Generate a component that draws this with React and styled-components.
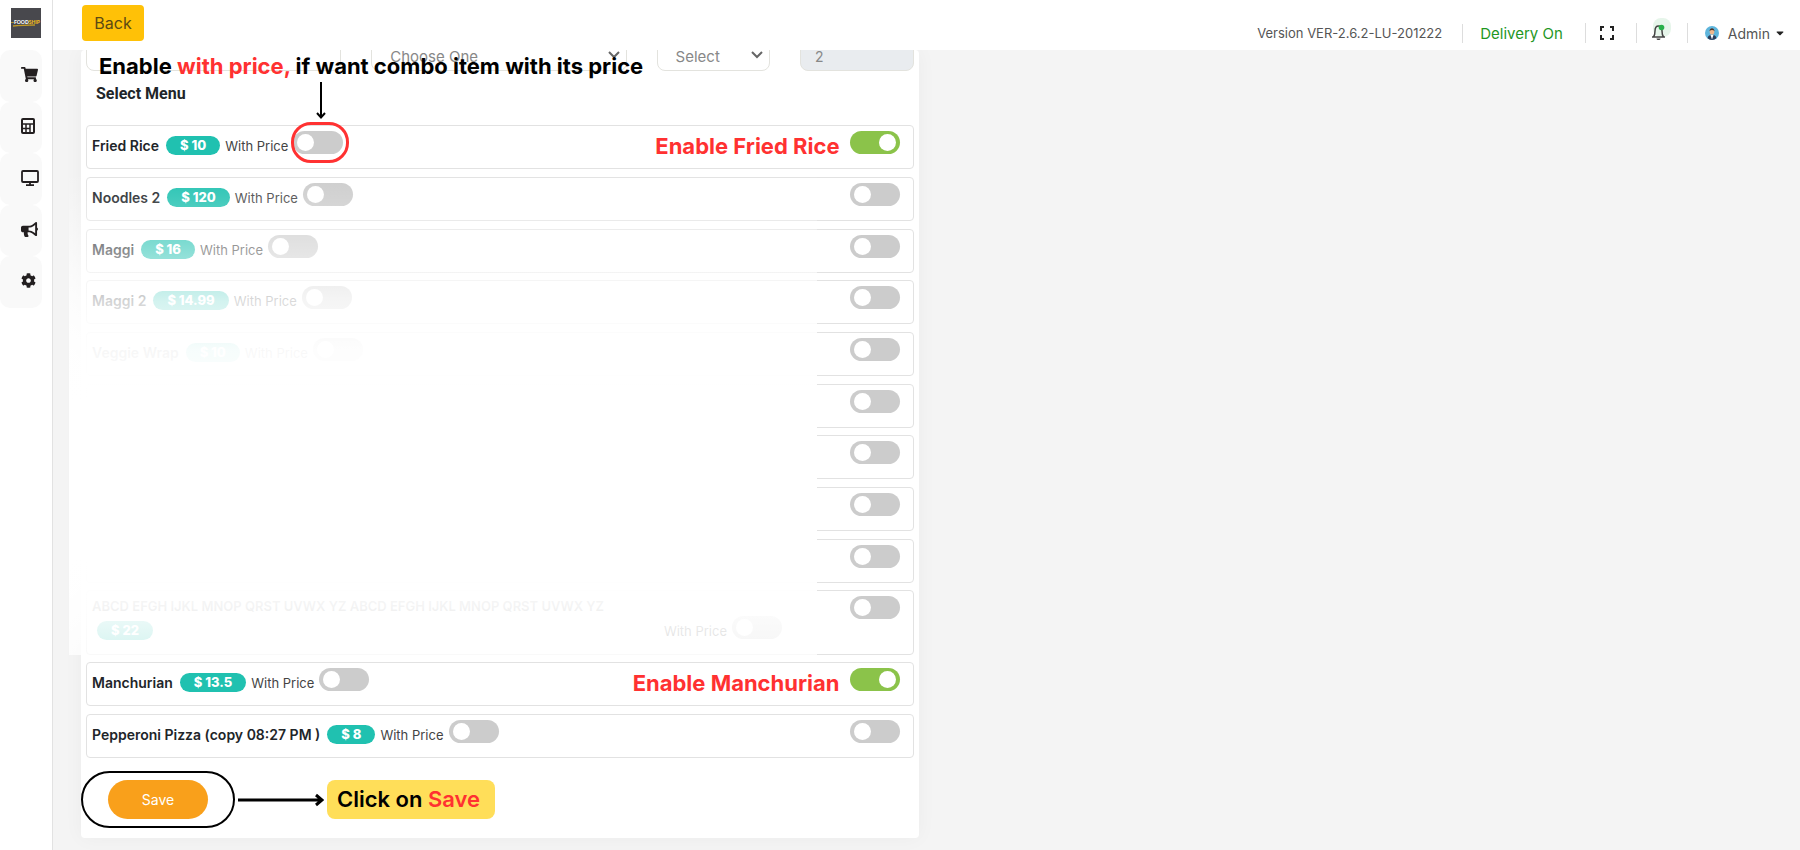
import styled, { createGlobalStyle } from "styled-components";
import { FaShoppingCart, FaBullhorn, FaCog, FaCaretDown } from "react-icons/fa";

const menuItems = [
  { id: 1, name: "Fried Rice", price: "10", enabled: true, note: "Enable Fried Rice", ringed: true },
  { id: 2, name: "Noodles 2", price: "120" },
  { id: 3, name: "Maggi", price: "16" },
  { id: 4, name: "Maggi 2", price: "14.99" },
  { id: 5, name: "Veggie Wrap", price: "10" },
  { id: 6 },
  { id: 7 },
  { id: 8 },
  { id: 9 },
  {
    id: 10,
    name: "ABCD EFGH IJKL MNOP QRST UVWX YZ ABCD EFGH IJKL MNOP QRST UVWX YZ",
    price: "22",
    wrapped: true,
  },
  { id: 11, name: "Manchurian", price: "13.5", enabled: true, note: "Enable Manchurian" },
  { id: 12, name: "Pepperoni Pizza (copy 08:27 PM )", price: "8" },
];

const CalculatorIcon = () => (
  <svg width="14" height="16" viewBox="0 0 14 16" fill="none" stroke="currentColor">
    <rect x="1" y="1" width="12" height="14" rx="1" strokeWidth="2" />
    <path d="M1 6h12M1 10.5h8M5 6v9M9 6v9" strokeWidth="1.5" />
  </svg>
);

const DesktopIcon = () => (
  <svg width="18" height="16" viewBox="0 0 18 16" fill="none" stroke="currentColor">
    <rect x="1" y="1" width="16" height="11" rx="1" strokeWidth="1.8" />
    <path d="M9 12v3M5 15.2h8" strokeWidth="1.8" />
  </svg>
);

const FullscreenIcon = () => (
  <svg width="14" height="14" viewBox="0 0 14 14" fill="none" stroke="#222" strokeWidth="2">
    <path d="M1 5V1h3M10 1h3v4M13 9v4h-3M4 13H1V9" />
  </svg>
);

const BellIcon = () => (
  <svg width="20" height="30" viewBox="0 0 20 30" fill="none">
    <rect x="2" y="0" width="18" height="19" rx="8" fill="#e6f5ea" />
    <path
      d="M1 19h13M2.5 19c1.5-2 1.5-3 1.5-6 0-3 1.5-5 3.5-5S11 10 11 13c0 3 0 4 1.5 6"
      stroke="#444"
      strokeWidth="1.5"
    />
    <path d="M5.5 20.5h4c0 2-4 2-4 0z" fill="#444" />
    <circle cx="10.5" cy="9.5" r="2.8" fill="#28b04a" />
  </svg>
);

const AvatarIcon = () => (
  <svg width="14" height="14" viewBox="0 0 14 14">
    <circle cx="7" cy="7" r="7" fill="#5eb5dc" />
    <path d="M2.5 12.3C3 9.5 5 9 7 9s4 .5 4.5 3.3A7 7 0 0 1 2.5 12.3z" fill="#2c3e5c" />
    <path d="M5.5 9 7 13.5 8.5 9z" fill="#fff" />
    <ellipse cx="7" cy="5.8" rx="2.3" ry="3" fill="#f0b78c" />
    <path d="M4.5 5.2c0-4 5-4 5 0-1.2-1.5-3.8-1.5-5 0z" fill="#4d3427" />
  </svg>
);

const Logo = () => (
  <svg width="30" height="30" viewBox="0 0 30 30">
    <rect width="30" height="30" fill="#48484d" />
    <text x="3" y="16" fontFamily="Lato" fontSize="5" fontWeight="900" fill="#fff">
      FOOD
      <tspan fill="#f2bd1d">SHIP</tspan>
    </text>
    <path d="M0 14.5h3M2 18c8-1 14-1 22-1-8 .5-14 .5-22 1z" stroke="#f2bd1d" strokeWidth=".6" />
  </svg>
);

const Switch = ({ label, on }) => (
  <SwitchInput type="checkbox" role="switch" aria-label={label} defaultChecked={on} />
);

const MenuRow = ({ item }) => {
  const label = item.name || `Menu item ${item.id}`;
  return (
    <Row $tall={item.wrapped}>
      {item.name && (
        <Details $wrapped={item.wrapped}>
          <Name $wrapped={item.wrapped}>{item.name}</Name>
          <Badge $wrapped={item.wrapped}>$ {item.price}</Badge>
          <PriceLabel>With Price</PriceLabel>
          <SwitchBox>
            <Switch label={`${label} with price`} />
            {item.ringed && (
              <>
                <RedRing />
                <DownArrow width="12" height="38" viewBox="0 0 12 38" fill="none" stroke="#000">
                  <path d="M6 0v35M2 31l4 4.5 4-4.5" strokeWidth="2" />
                </DownArrow>
              </>
            )}
          </SwitchBox>
        </Details>
      )}
      <RowEnd>
        {item.note && <Note>{item.note}</Note>}
        <Switch label={`Enable ${label}`} on={item.enabled} />
      </RowEnd>
    </Row>
  );
};

const Chevron = () => (
  <ChevronSvg width="12" height="8" viewBox="0 0 12 8" fill="none" stroke="#666">
    <path d="M1 1l5 5 5-5" strokeWidth="2" />
  </ChevronSvg>
);

const App = () => {
  return (
    <Page>
      <GlobalStyle />
      <Sidebar>
        <LogoLink href="#" aria-label="Food Ship">
          <Logo />
        </LogoLink>
        <SideLink href="#" aria-label="Orders">
          <FaShoppingCart size={17} />
        </SideLink>
        <SideLink href="#" aria-label="POS">
          <CalculatorIcon />
        </SideLink>
        <SideLink href="#" aria-label="Display">
          <DesktopIcon />
        </SideLink>
        <SideLink href="#" aria-label="Marketing">
          <FaBullhorn size={17} />
        </SideLink>
        <SideLink href="#" aria-label="Settings">
          <FaCog size={15} />
        </SideLink>
      </Sidebar>
      <Body>
        <Header>
          <BackButton type="button">Back</BackButton>
          <Status>
            <Version>Version VER-2.6.2-LU-201222</Version>
            <Delivery>Delivery On</Delivery>
            <IconButton type="button" aria-label="Full screen">
              <FullscreenIcon />
            </IconButton>
            <IconButton type="button" aria-label="Notifications">
              <BellIcon />
            </IconButton>
            <AdminButton type="button">
              <AvatarIcon />
              <AdminName>Admin</AdminName>
              <FaCaretDown size={12} />
            </AdminButton>
          </Status>
        </Header>
        <Main>
          <Card>
            <Fields>
              <TextField aria-label="Name" />
              <SelectBox>
                <SelectField aria-label="Category">
                  <option>Choose One</option>
                </SelectField>
                <Chevron />
              </SelectBox>
              <SelectBox>
                <SelectField aria-label="Type">
                  <option>Select</option>
                </SelectField>
                <Chevron />
              </SelectBox>
              <TextField aria-label="Quantity" defaultValue="2" disabled />
              <Hint>
                Enable <Red>with price,</Red> if want combo item with its price
              </Hint>
            </Fields>
            <Title>Select Menu</Title>
            <List>
              {menuItems.map((item) => (
                <MenuRow key={item.id} item={item} />
              ))}
              <Fade />
            </List>
            <Footer>
              <SaveRing>
                <SaveButton type="button">Save</SaveButton>
              </SaveRing>
              <svg width="86" height="14" viewBox="0 0 86 14" fill="none" stroke="#000">
                <path d="M0 7h84M78 2l6 5-6 5" strokeWidth="3" />
              </svg>
              <Callout>
                Click on <Red>Save</Red>
              </Callout>
            </Footer>
          </Card>
        </Main>
      </Body>
    </Page>
  );
};

const GlobalStyle = createGlobalStyle`
  * {
    box-sizing: border-box;
  }
  body {
    margin: 0;
    background: #f4f4f4;
    color: #212529;
    font-family: Inter, "Noto Sans", sans-serif;
    font-size: 14px;
  }
  button, input, select {
    font-family: inherit;
  }
`;

const Page = styled.div`
  display: flex;
  min-height: 100vh;
`;

const Sidebar = styled.nav`
  width: 53px;
  flex-shrink: 0;
  background: #fff;
  border-right: 1px solid #e2e2e2;
`;

const LogoLink = styled.a`
  display: block;
  height: 50px;
  padding: 8px 11px;
`;

const SideLink = styled.a`
  display: flex;
  align-items: center;
  width: 42px;
  height: 52px;
  padding: 0 0 3px 21px;
  border-radius: 10px;
  background: #f9f9f9;
  color: #231f20;

  &:nth-child(odd) {
    height: 51px;
  }
`;

const Body = styled.div`
  flex: 1;
  min-width: 0;
`;

const Header = styled.header`
  display: flex;
  justify-content: space-between;
  height: 50px;
  padding: 5px 14px 0 29px;
  background: #fff;
`;

const BackButton = styled.button`
  width: 62px;
  height: 36px;
  padding: 0;
  border: 0;
  border-radius: 4px;
  background: #ffc107;
  color: #5c4a14;
  font-size: 16px;
`;

const Status = styled.div`
  display: flex;
  align-items: center;
  height: 56px;
  color: #555;
`;

const Version = styled.span`
  padding-right: 20px;
  font-size: 13px;
`;

const Delivery = styled.span`
  padding: 0 22px 0 17px;
  border-left: 1px solid #ddd;
  color: #1f971f;
  font-size: 15px;
`;

const IconButton = styled.button`
  display: flex;
  align-items: center;
  width: 51px;
  height: 20px;
  padding: 0 0 0 14px;
  border: 0;
  border-left: 1px solid #ddd;
  background: none;
`;

const AdminButton = styled.button`
  display: flex;
  align-items: center;
  height: 20px;
  padding: 0 0 0 17px;
  border: 0;
  border-left: 1px solid #ddd;
  background: none;
  color: #222;
`;

const AdminName = styled.span`
  margin: 0 4px 0 9px;
  color: #555;
  font-size: 14px;
`;

const Main = styled.main`
  display: grid;
  grid-template-columns: 1fr 1fr;
  gap: 16px;
  padding: 0 28px 12px;
  overflow: hidden;
`;

const Card = styled.section`
  padding: 0 5px 10px;
  border-radius: 4px;
  background: #fff;
  box-shadow: 0 0 20px rgba(0, 0, 0, 0.04);
`;

const Fields = styled.div`
  position: relative;
  display: grid;
  grid-template-columns: 9fr 9fr 4fr 4fr;
  gap: 30px;
  margin-top: -9px;
`;

const TextField = styled.input`
  min-width: 0;
  height: 30px;
  padding: 0 14px;
  border: 1px solid #e3e3de;
  border-radius: 8px;
  color: #888;
  font-size: 14px;

  &:disabled {
    background: #e9ecef;
  }
`;

const SelectBox = styled.div`
  position: relative;
`;

const SelectField = styled.select`
  appearance: none;
  display: block;
  width: 100%;
  height: 30px;
  padding: 0 18px;
  border: 1px solid #e3e3de;
  border-radius: 8px;
  background: #fff;
  color: #888;
  font-size: 15px;
`;

const ChevronSvg = styled.svg`
  position: absolute;
  right: 7px;
  top: 10px;
`;

const Hint = styled.p`
  position: absolute;
  top: 11px;
  left: 13px;
  margin: 0;
  color: #000;
  font-size: 22px;
  font-weight: 700;
  line-height: 28px;
  white-space: nowrap;
`;

const Red = styled.span`
  color: #ff3131;
`;

const Title = styled.h4`
  margin: 12px 0 20px 10px;
  font-family: Roboto, sans-serif;
  font-size: 16px;
  line-height: 22px;
`;

const List = styled.div`
  position: relative;
`;

const Row = styled.div`
  display: flex;
  justify-content: space-between;
  height: ${(props) => (props.$tall ? "65px" : "44px")};
  margin-bottom: ${(props) => (props.$tall ? "7px" : "8px")};
  padding: 5px 13px 0 5px;
  border: 1px solid #e2e2e2;
  border-radius: 4px;

  &:nth-child(3n) {
    margin-bottom: 7px;
  }
`;

const Details = styled.div`
  display: flex;
  flex-wrap: wrap;
  align-content: flex-start;
  align-items: flex-start;
  width: ${(props) => (props.$wrapped ? "690px" : "auto")};
`;

const Name = styled.span`
  flex-basis: ${(props) => (props.$wrapped ? "100%" : "auto")};
  margin-right: ${(props) => (props.$wrapped ? "0" : "7px")};
  font-size: ${(props) => (props.$wrapped ? "13px" : "14px")};
  font-weight: 600;
  line-height: ${(props) => (props.$wrapped ? "20px" : "30px")};
`;

const Badge = styled.span`
  margin: ${(props) => (props.$wrapped ? "5px auto 0 5px" : "5px 5px 0 0")};
  padding: 0 14px;
  border-radius: 10px;
  background: #20c1b0;
  color: #fff;
  font-size: 13px;
  font-weight: 800;
  line-height: 19px;
`;

const PriceLabel = styled.span`
  margin-right: 5px;
  color: #444;
  font-size: 13px;
  line-height: 30px;
`;

const SwitchBox = styled.span`
  position: relative;
  display: flex;
`;

const SwitchInput = styled.input`
  appearance: none;
  display: flex;
  align-items: center;
  width: 50px;
  height: 23px;
  margin: 0;
  padding: 0 4px;
  border-radius: 12px;
  background: #ccc;

  &::before {
    content: "";
    width: 17px;
    height: 17px;
    border-radius: 50%;
    background: #fff;
  }

  &:checked {
    justify-content: flex-end;
    background: #8bc34a;
  }
`;

const RedRing = styled.span`
  position: absolute;
  top: -9px;
  left: -2px;
  width: 58px;
  height: 41px;
  border: 3px solid #ff3131;
  border-radius: 20px;
`;

const DownArrow = styled.svg`
  position: absolute;
  top: -49px;
  left: 22px;
`;

const RowEnd = styled.div`
  display: flex;
  gap: 10px;
  margin-left: auto;
`;

const Note = styled.span`
  color: #ff3131;
  font-size: 22px;
  font-weight: 700;
  line-height: 30px;
`;

const Fade = styled.div`
  position: absolute;
  top: 45px;
  right: 97px;
  bottom: 103px;
  left: -17px;
  background: linear-gradient(
    rgba(255, 255, 255, 0) 0%,
    rgba(255, 255, 255, 0.15) 6%,
    rgba(255, 255, 255, 0.45) 16%,
    rgba(255, 255, 255, 0.8) 27%,
    rgba(255, 255, 255, 0.96) 37%,
    #fff 48%,
    #fff 80%,
    rgba(255, 255, 255, 0.95) 90%,
    rgba(255, 255, 255, 0.8) 100%
  );
`;

const Footer = styled.div`
  display: flex;
  align-items: center;
  gap: 3px;
  margin: 13px 0 0 -5px;
`;

const SaveRing = styled.div`
  padding: 7px 25px;
  border: 2px solid #000;
  border-radius: 29px;
`;

const SaveButton = styled.button`
  display: block;
  width: 100px;
  height: 39px;
  border: 0;
  border-radius: 20px;
  background: #f9a01b;
  color: #fff;
  font-size: 14px;
`;

const Callout = styled.div`
  padding: 0 15px 0 10px;
  border-radius: 8px;
  background: #ffde59;
  color: #000;
  font-size: 22px;
  font-weight: 600;
  line-height: 39px;
`;

export default App;
